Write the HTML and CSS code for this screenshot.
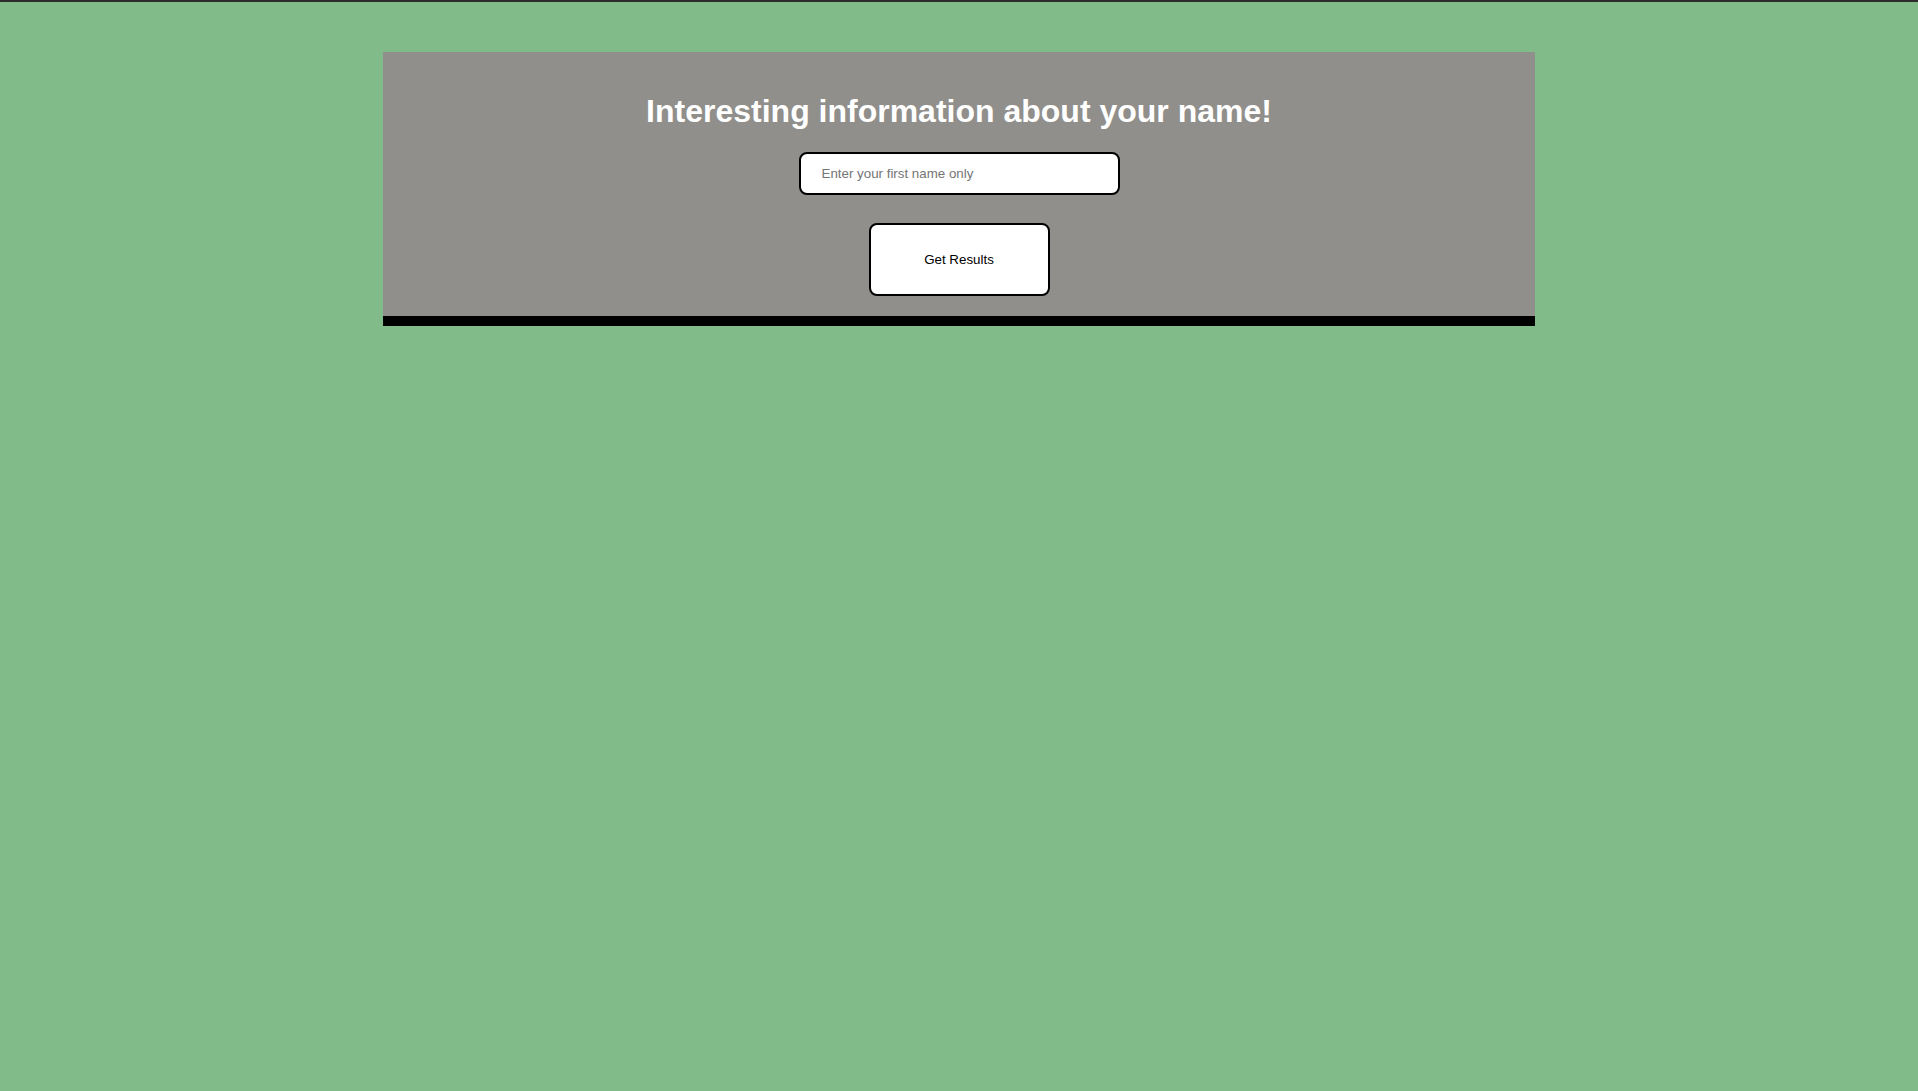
FILE: index.html
```html
<!DOCTYPE html>
<html lang="en">
<head>
<meta charset="utf-8">
<title>Name Info</title>
<link rel="stylesheet" href="styles.css">
</head>
<body>
<div class="topline"></div>
<main class="panel">
  <h1 class="title">Interesting information about your name!</h1>
  <input class="name-input" type="text" placeholder="Enter your first name only">
  <button class="submit-btn" type="button">Get Results</button>
</main>
</body>
</html>
```
FILE: styles.css
```css
html, body {
  margin: 0;
  padding: 0;
}
body {
  background: #80bb89;
  min-height: 100vh;
  font-family: "Liberation Sans", Arial, sans-serif;
}
.topline {
  height: 2px;
  background: #2b2b2b;
}
.panel {
  width: 1152px;
  margin: 50px auto 0;
  background: #918f8b;
  border-bottom: 10px solid #000;
  padding: 41px 0 20px;
  display: flex;
  flex-direction: column;
  align-items: center;
  box-sizing: border-box;
}
.title {
  margin: 0 0 22px;
  font-size: 32px;
  line-height: 37px;
  font-weight: bold;
  color: #fff;
}
.name-input {
  width: 321px;
  height: 43px;
  box-sizing: border-box;
  border: 2px solid #000;
  border-radius: 8px;
  padding: 0 21px;
  font-family: "Liberation Sans", Arial, sans-serif;
  font-size: 13.33px;
  background: #fff;
  margin: 0 0 28px;
  outline: none;
}
.name-input::placeholder {
  color: #757575;
}
.submit-btn {
  width: 181px;
  height: 73px;
  box-sizing: border-box;
  border: 2px solid #000;
  border-radius: 8px;
  background: #fff;
  font-family: "Liberation Sans", Arial, sans-serif;
  font-size: 13.33px;
  color: #000;
  cursor: pointer;
}
```
